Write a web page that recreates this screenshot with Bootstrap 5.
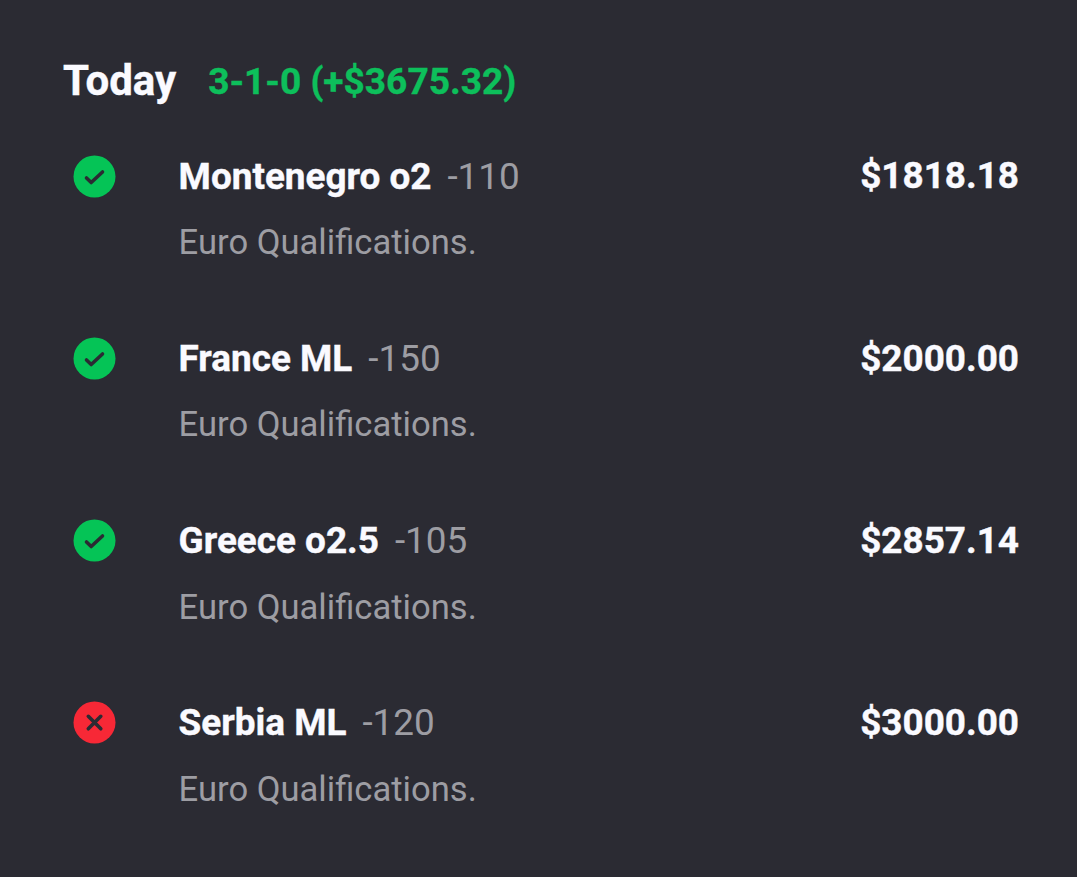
<!DOCTYPE html>
<html lang="en">
<head>
<meta charset="utf-8">
<meta name="viewport" content="width=device-width, initial-scale=1">
<title>Today</title>
<link rel="stylesheet" href="https://cdn.jsdelivr.net/npm/bootstrap@5.3.0/dist/css/bootstrap.min.css">
<style>
body{background:#2b2b33;color:#fafaff;font-family:Roboto,sans-serif;height:877px;overflow:hidden}
.slip{padding:55px 58px 0 63px}
.day{font-size:42px;line-height:51px;-webkit-text-stroke:.4px}
.record{font-size:37.1px;line-height:54px;color:#0dbf5b;margin-left:32px;-webkit-text-stroke:.4px}
.bet{height:182px;padding-left:10px}
.bets{padding-top:42px}
.status{width:43px;height:43px;margin-top:4px;margin-right:62.6px}
.status path{fill:none;stroke:#2b2b33;stroke-width:3.6;stroke-linecap:round;stroke-linejoin:round}
.won{fill:#05c456}
.lost{fill:#f72836}
.pick,.stake{font-size:36.9px;line-height:50px;-webkit-text-stroke:.4px}
.pick,.bet + .bet .stake{padding-top:1px}
.odds{color:#9d9da3;font-weight:400;margin-left:16px;-webkit-text-stroke:0}
.league{font-size:34.6px;line-height:50px;color:#9d9da3;margin-top:15px}
.bet:nth-child(n+3) .league{margin-top:16px}
</style>
</head>
<body>
<main class="slip">
<header class="d-flex fw-bold"><h1 class="day fw-bold m-0">Today</h1><span class="record">3-1-0 (+$3675.32)</span></header>
<section class="bets">
<article class="bet d-flex">
<svg class="status flex-shrink-0" viewBox="0 0 43 43"><circle class="won" cx="21.5" cy="21.5" r="21"/><path d="M13.5 23l4.7 4.5L29.5 17"/></svg>
<div class="flex-grow-1"><div class="pick fw-bold">Montenegro o2<span class="odds">-110</span></div><div class="league">Euro Qualifications.</div></div>
<div class="stake fw-bold">$1818.18</div>
</article>
<article class="bet d-flex">
<svg class="status flex-shrink-0" viewBox="0 0 43 43"><circle class="won" cx="21.5" cy="21.5" r="21"/><path d="M13.5 23l4.7 4.5L29.5 17"/></svg>
<div class="flex-grow-1"><div class="pick fw-bold">France ML<span class="odds">-150</span></div><div class="league">Euro Qualifications.</div></div>
<div class="stake fw-bold">$2000.00</div>
</article>
<article class="bet d-flex">
<svg class="status flex-shrink-0" viewBox="0 0 43 43"><circle class="won" cx="21.5" cy="21.5" r="21"/><path d="M13.5 23l4.7 4.5L29.5 17"/></svg>
<div class="flex-grow-1"><div class="pick fw-bold">Greece o2.5<span class="odds">-105</span></div><div class="league">Euro Qualifications.</div></div>
<div class="stake fw-bold">$2857.14</div>
</article>
<article class="bet d-flex">
<svg class="status flex-shrink-0" viewBox="0 0 43 43"><circle class="lost" cx="21.5" cy="21.5" r="21"/><path d="M15.3 15.3l12.5 12.5M27.8 15.3L15.3 27.8"/></svg>
<div class="flex-grow-1"><div class="pick fw-bold">Serbia ML<span class="odds">-120</span></div><div class="league">Euro Qualifications.</div></div>
<div class="stake fw-bold">$3000.00</div>
</article>
</section>
</main>
<script src="https://cdn.jsdelivr.net/npm/bootstrap@5.3.0/dist/js/bootstrap.bundle.min.js"></script>
</body>
</html>
